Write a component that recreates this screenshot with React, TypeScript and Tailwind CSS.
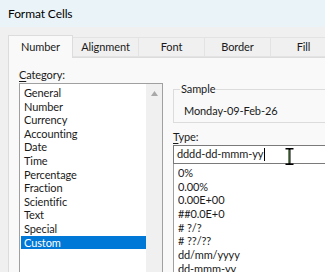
const tabs = ['Number', 'Alignment', 'Font', 'Border', 'Fill'];

const categories = [
  'General',
  'Number',
  'Currency',
  'Accounting',
  'Date',
  'Time',
  'Percentage',
  'Fraction',
  'Scientific',
  'Text',
  'Special',
  'Custom',
];

const formats = ['0%', '0.00%', '0.00E+00', '##0.0E+0', '# ?/?', '# ??/??', 'dd/mm/yyyy', 'dd-mmm-yy'];

export default function App() {
  return (
    <div
      className="h-[272px] w-[325px] overflow-hidden bg-[#f0f0f0] text-[11px] tracking-[-0.1px] text-[#1a1a1a]"
      style={{ fontFamily: 'Lato, "Noto Sans", sans-serif' }}
    >
      {/* title bar */}
      <div className="flex h-[27px] items-center bg-[#eaf4f8] pl-[8px] text-[12px] text-black">Format Cells</div>

      <div className="pl-[8px] pt-[8px]">
        {/* tabs */}
        <div className="flex h-[22px] items-end">
          {tabs.map((tab, i) =>
            i === 0 ? (
              <div
                key={tab}
                className="relative z-10 -mb-px flex h-[23px] w-[65px] shrink-0 items-center justify-center border border-b-0 border-[#dcdcdc] bg-[#f9f9f9]"
              >
                {tab}
              </div>
            ) : (
              <div
                key={tab}
                className="flex h-[20px] w-[66px] shrink-0 items-center justify-center border-b border-r border-t border-[#e3e3e3] bg-[#f0f0f0]"
              >
                {tab}
              </div>
            )
          )}
        </div>

        {/* panel */}
        <div className="flex h-[240px] border-l border-t border-[#dcdcdc] bg-[#f9f9f9] pl-[10px]">
          <div className="w-[144px] shrink-0">
            <div className="mt-[9px] h-[16px] leading-[16px]">
              <span className="underline underline-offset-2">C</span>ategory:
            </div>
            <div className="flex h-[200px] border border-[#a0a0a0] bg-white">
              <div className="flex-1 pl-[1px] pt-[2px]">
                {categories.map((c) => (
                  <div
                    key={c}
                    className={
                      c === 'Custom'
                        ? 'h-[13.6px] bg-[#0078d7] pl-[3px] leading-[13.6px] text-white'
                        : 'h-[13.6px] pl-[3px] leading-[13.6px]'
                    }
                  >
                    {c}
                  </div>
                ))}
              </div>
              <div className="flex w-[16px] shrink-0 justify-center bg-[#f0f0f0] pt-[7px]">
                <svg width="7" height="5" viewBox="0 0 7 5">
                  <path d="M3.5 0 L7 5 L0 5 Z" fill="#a8a8a8" />
                </svg>
              </div>
            </div>
          </div>

          <div className="ml-[10px] flex-1">
            {/* sample group */}
            <div className="relative mt-[31px] h-[34px] w-[170px] border-b border-l border-t border-[#dcdcdc]">
              <span className="absolute -top-[9px] left-[6px] bg-[#f9f9f9] px-[1px] leading-[16px]">Sample</span>
              <div className="pl-[10px] pt-[13px] leading-[16px]">Monday-09-Feb-26</div>
            </div>

            <div className="mt-[6px] h-[16px] leading-[16px]">
              <span className="underline underline-offset-2">T</span>ype:
            </div>
            <div className="relative flex h-[19px] items-center border-b border-l border-t border-[#7a7a7a] bg-white pl-[3px]">
              <span>dddd-dd-mmm-yy</span>
              <span className="ml-px inline-block h-[13px] w-px bg-black" />
              {/* I-beam cursor */}
              <svg className="absolute left-[111px] top-[2px]" width="9" height="17" viewBox="0 0 9 17">
                <path d="M0.5 0.5 H8.5 M4.5 0.5 V16.5 M0.5 16.5 H8.5" stroke="#000" strokeWidth="2" fill="none" />
                <path d="M4.5 2 V15" stroke="#2e5a1c" strokeWidth="1" />
              </svg>
            </div>
            <div className="h-[120px] border-l border-[#a0a0a0] bg-white pl-[4px] pt-[2px]">
              {formats.map((f) => (
                <div key={f} className="h-[13.7px] leading-[13.7px]">
                  {f}
                </div>
              ))}
            </div>
          </div>
        </div>
      </div>
    </div>
  );
}
